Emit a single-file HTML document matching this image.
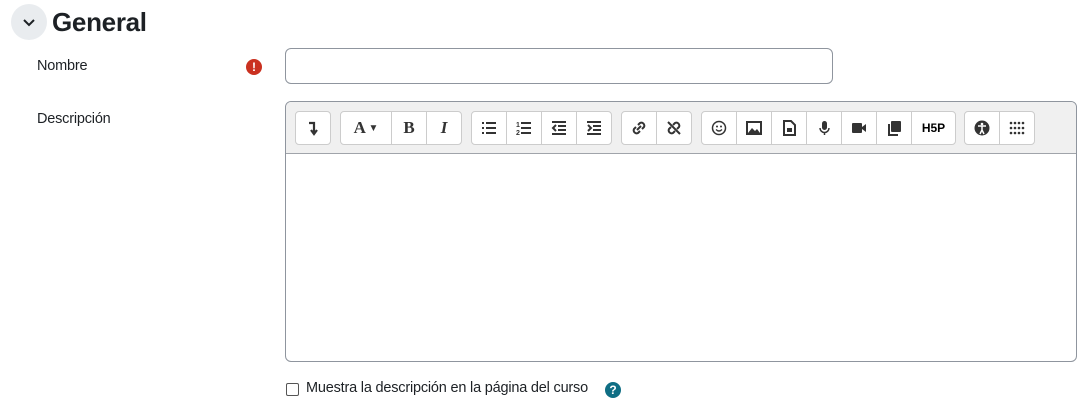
<!DOCTYPE html>
<html><head><meta charset="utf-8"><style>
body{margin:0;width:1089px;height:410px;background:#fff;font-family:"Liberation Sans",sans-serif;color:#1d2125;position:relative;overflow:hidden}
.a{position:absolute}
.circ{left:11px;top:4px;width:36px;height:36px;border-radius:50%;background:#e9ecef}
h1{position:absolute;left:52px;top:4px;margin:0;font-size:26px;font-weight:bold;line-height:36px;letter-spacing:-0.3px}
.lbl{font-size:14.5px;letter-spacing:-0.2px}
.inp{left:285px;top:48px;width:546px;height:34px;border:1px solid #8f959e;border-radius:6px}
.ed{left:285px;top:101px;width:790px;height:259px;border:1px solid #8f959e;border-radius:6px;overflow:hidden}
.tb{position:absolute;left:0;top:0;right:0;height:51px;background:#f0f0f0;border-bottom:1px solid #a0a4aa}
.g{position:absolute;top:9px;height:32px;background:#fff;border:1px solid #ccc;border-radius:4px;display:flex}
.b{box-sizing:border-box;width:35px;height:32px;border-right:1px solid #ccc;display:flex;align-items:center;justify-content:center;font-size:15px;font-weight:bold;color:#333}
.b:last-child{border-right:none;width:34px}
.b svg{width:16px;height:16px}
</style></head><body>
<div class="a circ"><svg width="36" height="36"><path d="M13 16l5 5 5-5" stroke="#1d2125" stroke-width="2" fill="none"/></svg></div>
<h1>General</h1>
<div class="a lbl" style="left:37px;top:58px">Nombre</div>
<div class="a" style="left:246px;top:59px;width:16px;height:16px;border-radius:50%;background:#ca3120;color:#fff;font-size:12px;font-weight:bold;text-align:center;line-height:16px">!</div>
<div class="a inp"></div>
<div class="a lbl" style="left:37px;top:111px">Descripción</div>
<div class="a ed"><div class="tb">
<div class="g" style="left:9px"><div class="b"><svg viewBox="0 0 16 16"><path d="M4 3h5v9M6 10l3 4 3-4" stroke="#333" stroke-width="2.2" fill="none"/></svg></div></div>
<div class="g" style="left:54px"><div class="b" style="width:51px;font-family:'Liberation Serif',serif;font-size:17px">A<span style="font-size:10px">&nbsp;▼</span></div><div class="b" style="font-family:'Liberation Serif',serif;font-size:17px">B</div><div class="b" style="font-family:'Liberation Serif',serif;font-style:italic;font-size:17px">I</div></div>
<div class="g" style="left:185px"><div class="b"><svg viewBox="0 0 16 16"><path d="M1 3h2M1 8h2M1 13h2M5 3h10M5 8h10M5 13h10" stroke="#333" stroke-width="2" fill="none"/></svg></div><div class="b"><svg viewBox="0 0 16 16"><path d="M5 3h10M5 8h10M5 13h10" stroke="#333" stroke-width="2"/><text x="0" y="7" font-size="7" fill="#333">1</text><text x="0" y="15" font-size="7" fill="#333">2</text></svg></div><div class="b"><svg viewBox="0 0 16 16"><path d="M1 2h14M7 6h8M7 10h8M1 14h14M5 5l-3 3 3 3" stroke="#333" stroke-width="2" fill="none"/></svg></div><div class="b"><svg viewBox="0 0 16 16"><path d="M1 2h14M7 6h8M7 10h8M1 14h14M2 5l3 3-3 3" stroke="#333" stroke-width="2" fill="none"/></svg></div></div>
<div class="g" style="left:335px"><div class="b"><svg viewBox="0 0 16 16"><path d="M7 5l2-2a3 3 0 014 4l-2 2M9 11l-2 2a3 3 0 01-4-4l2-2M6 10l4-4" stroke="#333" stroke-width="2" fill="none"/></svg></div><div class="b"><svg viewBox="0 0 16 16"><path d="M7 5l2-2a3 3 0 014 4l-2 2M9 11l-2 2a3 3 0 01-4-4l2-2M2 2l12 12" stroke="#333" stroke-width="2" fill="none"/></svg></div></div>
<div class="g" style="left:415px"><div class="b"><svg viewBox="0 0 16 16"><circle cx="8" cy="8" r="6.5" stroke="#333" stroke-width="1.5" fill="none"/><circle cx="6" cy="6.5" r="1" fill="#333"/><circle cx="10" cy="6.5" r="1" fill="#333"/><path d="M5 9.5q3 3 6 0" stroke="#333" stroke-width="1.3" fill="none"/></svg></div><div class="b"><svg viewBox="0 0 16 16"><rect x="1" y="2" width="14" height="12" stroke="#333" stroke-width="2" fill="none"/><path d="M2 13l4-5 3 3 2-2 3 4z" fill="#333"/></svg></div><div class="b"><svg viewBox="0 0 16 16"><path d="M3 1h7l4 4v10H3z" stroke="#333" stroke-width="2" fill="none"/><rect x="6" y="8" width="5" height="4" fill="#333"/></svg></div><div class="b"><svg viewBox="0 0 16 16"><rect x="6" y="1" width="5" height="9" rx="2.5" fill="#333"/><path d="M4 8a4.5 4.5 0 009 0M8.5 12v3" stroke="#333" stroke-width="1.5" fill="none"/></svg></div><div class="b"><svg viewBox="0 0 16 16"><rect x="1" y="3" width="10" height="10" rx="1" fill="#333"/><path d="M11 7l4-3v8l-4-3z" fill="#333"/></svg></div><div class="b"><svg viewBox="0 0 16 16"><rect x="5" y="1" width="10" height="11" rx="1" fill="#333"/><path d="M3 4v11h9" stroke="#333" stroke-width="2" fill="none"/></svg></div><div class="b" style="width:43px;font-size:12px;color:#000">H5P</div></div>
<div class="g" style="left:678px"><div class="b"><svg viewBox="0 0 16 16"><circle cx="8" cy="8" r="7.5" fill="#333"/><circle cx="8" cy="4" r="1.3" fill="#fff"/><path d="M4 6h8M8 6v4l-2 4M8 10l2 4" stroke="#fff" stroke-width="1.5" fill="none"/></svg></div><div class="b"><svg viewBox="0 0 16 16" fill="#333"><g><circle cx="2" cy="3" r="1.3"/><circle cx="6" cy="3" r="1.3"/><circle cx="10" cy="3" r="1.3"/><circle cx="14" cy="3" r="1.3"/><circle cx="2" cy="8" r="1.3"/><circle cx="6" cy="8" r="1.3"/><circle cx="10" cy="8" r="1.3"/><circle cx="14" cy="8" r="1.3"/><circle cx="2" cy="13" r="1.3"/><circle cx="6" cy="13" r="1.3"/><circle cx="10" cy="13" r="1.3"/><circle cx="14" cy="13" r="1.3"/></g></svg></div></div>
</div></div>
<div class="a" style="left:286px;top:383px;width:11px;height:11px;border:1px solid #555;border-radius:2px"></div>
<div class="a lbl" style="left:306px;top:380px">Muestra la descripción en la página del curso</div>
<div class="a" style="left:605px;top:382px;width:16px;height:16px;border-radius:50%;background:#0f6e84;color:#fff;font-size:12px;font-weight:bold;text-align:center;line-height:16px">?</div>
</body></html>
